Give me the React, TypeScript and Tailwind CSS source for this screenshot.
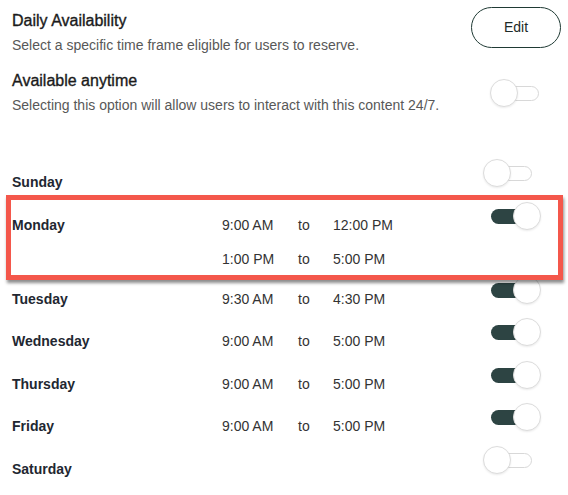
import React from "react";

type Day = {
  name: string;
  on: boolean;
  slots: [string, string][];
  marked?: boolean;
};

const DAYS: Day[] = [
  { name: "Sunday", on: false, slots: [] },
  {
    name: "Monday",
    on: true,
    slots: [
      ["9:00 AM", "12:00 PM"],
      ["1:00 PM", "5:00 PM"],
    ],
    marked: true,
  },
  { name: "Tuesday", on: true, slots: [["9:30 AM", "4:30 PM"]] },
  { name: "Wednesday", on: true, slots: [["9:00 AM", "5:00 PM"]] },
  { name: "Thursday", on: true, slots: [["9:00 AM", "5:00 PM"]] },
  { name: "Friday", on: true, slots: [["9:00 AM", "5:00 PM"]] },
  { name: "Saturday", on: false, slots: [] },
];

function Toggle({ on }: { on: boolean }) {
  return (
    <div className="relative h-[28px] w-[58px] shrink-0">
      <div
        className={
          on
            ? "absolute left-[8px] top-[7px] h-[15px] w-[41px] rounded-full bg-[#2d4443]"
            : "absolute left-[8px] top-[7px] h-[15px] w-[41px] rounded-full border border-[#d8d8d8] bg-white"
        }
      />
      <div
        className={
          on
            ? "absolute left-[30px] top-0 h-[28px] w-[28px] rounded-full border border-[#dcdcdc] bg-white shadow-[0_1px_2px_rgba(0,0,0,0.08)]"
            : "absolute left-0 top-0 h-[28px] w-[28px] rounded-full border border-[#dcdcdc] bg-white shadow-[0_1px_2px_rgba(0,0,0,0.08)]"
        }
      />
    </div>
  );
}

function DayRow({ day }: { day: Day }) {
  const multi = day.slots.length > 1;
  return (
    <div
      className={
        multi
          ? "relative flex items-start pt-[11px] pb-[9px]"
          : "relative flex items-start pt-[11px] pb-[11.5px]"
      }
    >
      <div className="w-[210px] shrink-0 text-[14px] font-bold leading-[20px] text-[#222731]">
        {day.name}
      </div>
      <div className="flex flex-1 flex-col gap-[14px]">
        {day.slots.map(([from, to]) => (
          <div
            key={from}
            className="flex text-[14px] leading-[20px] text-[#333333]"
          >
            <span className="w-[76px]">{from}</span>
            <span className="w-[35px]">to</span>
            <span>{to}</span>
          </div>
        ))}
      </div>
      <div className="mr-[27px] mt-[-13px]">
        <Toggle on={day.on} />
      </div>
      {day.marked && (
        <div className="pointer-events-none absolute -left-[6px] right-[5px] -top-[9px] -bottom-[2px] z-10 border-[5px] border-[#f4574b] shadow-[1px_3px_3px_rgba(0,0,0,0.45)]" />
      )}
    </div>
  );
}

export default function App() {
  return (
    <div className="h-[495px] w-[568px] overflow-hidden bg-white pl-[12px] font-['Liberation_Sans',Arial,sans-serif]">
      <div className="flex items-start justify-between pr-[7px]">
        <div className="pt-[11px]">
          <p className="text-[16px] leading-[20px] text-[#1b1b1b] [-webkit-text-stroke:0.35px_#1b1b1b]">
            Daily Availability
          </p>
          <p className="mt-[4px] text-[14px] leading-[20px] text-[#585858]">
            Select a specific time frame eligible for users to reserve.
          </p>
        </div>
        <button className="mt-[7px] h-[41px] w-[90px] rounded-full border border-[#1f3a34] bg-white text-[14px] text-[#1d2a27]">
          Edit
        </button>
      </div>

      <div className="mt-[16px] flex items-start justify-between pr-[20px]">
        <div>
          <p className="text-[16px] leading-[20px] text-[#1b1b1b] [-webkit-text-stroke:0.35px_#1b1b1b]">
            Available anytime
          </p>
          <p className="mt-[4px] text-[14px] leading-[20px] text-[#585858]">
            Selecting this option will allow users to interact with this
            content 24/7.
          </p>
        </div>
        <div className="mt-[8px]">
          <Toggle on={false} />
        </div>
      </div>

      <div className="mt-[46px]">
        {DAYS.map((d) => (
          <DayRow key={d.name} day={d} />
        ))}
      </div>
    </div>
  );
}
